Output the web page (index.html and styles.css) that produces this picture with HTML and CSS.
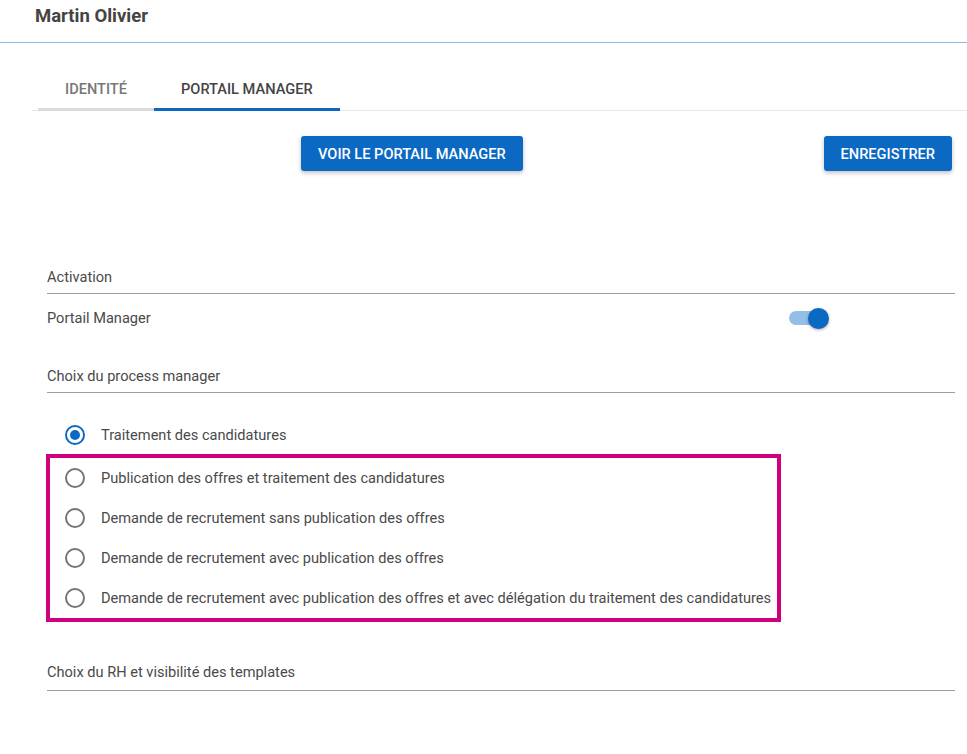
FILE: index.html
```html
<!DOCTYPE html>
<html lang="fr">
<head>
<meta charset="utf-8">
<title>Martin Olivier</title>
<link rel="stylesheet" href="styles.css">
</head>
<body>
<header class="header">
  <h1 class="title">Martin Olivier</h1>
</header>
<nav class="tabs">
  <div class="tab">IDENTITÉ</div>
  <div class="tab active">PORTAIL MANAGER</div>
</nav>
<div class="actions">
  <button class="btn">VOIR LE PORTAIL MANAGER</button>
  <button class="btn">ENREGISTRER</button>
</div>
<main class="content">
  <div class="section-title first">Activation</div>
  <div class="toggle-row">
    <span>Portail Manager</span>
    <span class="toggle"><span class="track"></span><span class="thumb"></span></span>
  </div>
  <div class="section-title">Choix du process manager</div>
  <div class="radios">
    <label class="radio-row"><span class="radio checked"></span><span>Traitement des candidatures</span></label>
    <div class="highlight">
      <label class="radio-row"><span class="radio"></span><span>Publication des offres et traitement des candidatures</span></label>
      <label class="radio-row"><span class="radio"></span><span>Demande de recrutement sans publication des offres</span></label>
      <label class="radio-row"><span class="radio"></span><span>Demande de recrutement avec publication des offres</span></label>
      <label class="radio-row"><span class="radio"></span><span>Demande de recrutement avec publication des offres et avec délégation du traitement des candidatures</span></label>
    </div>
  </div>
  <div class="section-title last">Choix du RH et visibilité des templates</div>
</main>
</body>
</html>
```
FILE: styles.css
```css
body {
  margin: 0;
  font-family: Roboto, "Liberation Sans", sans-serif;
  color: #4a4a4a;
  background: #fff;
}
.header {
  height: 43px;
  box-sizing: border-box;
  border-bottom: 1px solid #89bae5;
  padding: 4px 0 0 35px;
}
.title {
  margin: 0;
  font-size: 18.5px;
  font-weight: 700;
  line-height: 24px;
  color: #444;
}
.tabs {
  display: flex;
  margin: 23px 0 0 32px;
  border-bottom: 1px solid #e8e8e8;
}
.tab {
  padding: 4px 27px 0;
  line-height: 38px;
  font-size: 14.6px;
  font-weight: 500;
  color: #777;
  border-bottom: 3px solid #dadada;
  margin-bottom: -1px;
}
.tab:first-child { margin-left: 6px; }
.tab.active {
  color: #444;
  border-bottom-color: #0b69c4;
}
.actions {
  display: flex;
  justify-content: space-between;
  margin-top: 25px;
  padding: 0 15px 0 301px;
}
.btn {
  height: 35px;
  padding: 0 17px;
  border: none;
  border-radius: 3px;
  background: #0b69c4;
  color: #fff;
  font-family: Roboto, "Liberation Sans", sans-serif;
  font-size: 14.6px;
  font-weight: 500;
  box-shadow: 0 2px 4px rgba(0,0,0,0.25);
}
.content {
  padding: 0 12px 0 47px;
}
.section-title {
  font-size: 14.6px;
  line-height: 20px;
  padding-bottom: 6px;
  border-bottom: 1px solid #9e9e9e;
  margin-top: 24px;
}
.section-title.first { margin-top: 96px; }
.section-title.last { margin-top: 40px; padding-bottom: 8px; }
.toggle-row {
  display: grid;
  grid-template-columns: 742px auto;
  align-items: center;
  height: 48px;
  font-size: 14.6px;
}
.toggle {
  position: relative;
  display: block;
  width: 41px;
  height: 22px;
}
.track {
  position: absolute;
  left: 0;
  top: 4px;
  width: 34px;
  height: 14px;
  border-radius: 7px;
  background: #93bfe7;
}
.thumb {
  position: absolute;
  left: 19px;
  top: 1px;
  width: 21px;
  height: 21px;
  border-radius: 50%;
  background: #0b69c4;
  box-shadow: 0 1px 3px rgba(0,0,0,0.35);
}
.radios {
  padding-top: 22px;
}
.radio-row {
  display: flex;
  align-items: center;
  gap: 16px;
  height: 40px;
  padding-left: 18px;
  font-size: 14.6px;
}
.radio {
  box-sizing: border-box;
  width: 20px;
  height: 20px;
  border-radius: 50%;
  border: 2px solid #757575;
  flex: none;
  position: relative;
}
.radio.checked {
  border-color: #0b69c4;
}
.radio.checked::after {
  content: "";
  position: absolute;
  left: 3px;
  top: 3px;
  width: 10px;
  height: 10px;
  border-radius: 50%;
  background: #0b69c4;
}
.highlight {
  width: fit-content;
  border: 4px solid #d1007f;
  margin: -1px 0 0 -1px;
  padding-right: 6px;
}
.highlight .radio-row {
  padding-left: 15px;
}
```
